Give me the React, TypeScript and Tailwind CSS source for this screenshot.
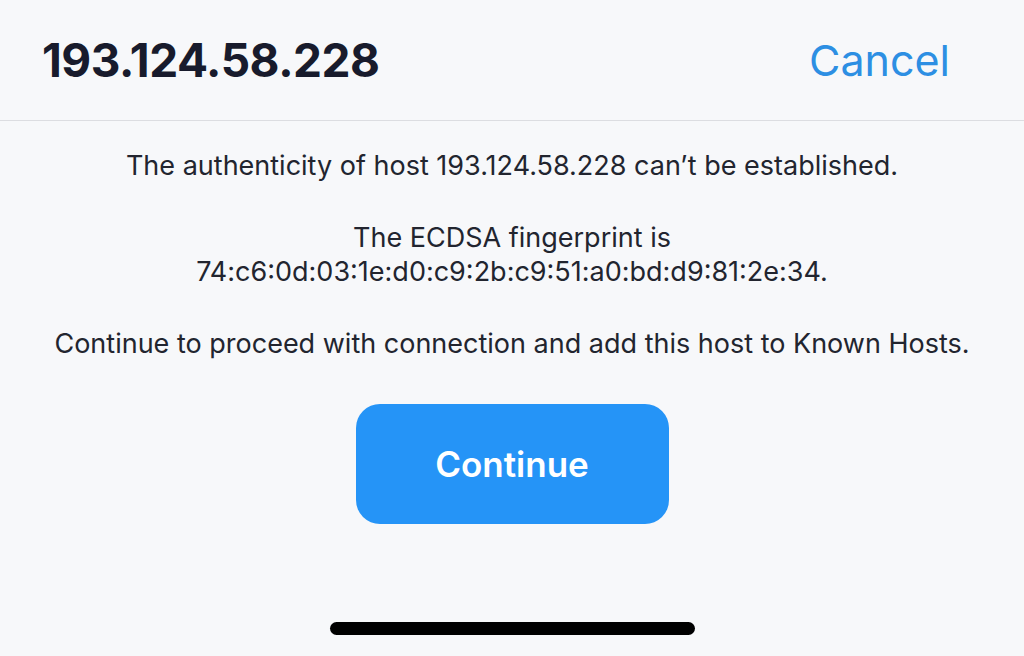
import React from "react";

const bodyFont = { fontFamily: "Inter, 'Noto Sans', sans-serif" };

export default function App() {
  return (
    <div
      className="flex h-[656px] w-[1024px] flex-col overflow-hidden bg-[#f7f8fa] text-[#22252f]"
      style={bodyFont}
    >
      <header className="flex h-[121px] shrink-0 items-center justify-between border-b border-[#dcdde1] pl-[42px] pr-[74px]">
        <h1 className="text-[46px] font-bold leading-none tracking-[-0.01em] text-[#181b2c]">
          193.124.58.228
        </h1>
        <button className="text-[43px] leading-none text-[#2d8fe3]">Cancel</button>
      </header>

      <main className="flex flex-col items-center text-center text-[27px] leading-[34px]">
        <p className="mt-[28px]">
          The authenticity of host 193.124.58.228 can’t be established.
        </p>
        <p className="mt-[38px]">
          The ECDSA fingerprint is
          <br />
          74:c6:0d:03:1e:d0:c9:2b:c9:51:a0:bd:d9:81:2e:34.
        </p>
        <p className="mt-[38px]">
          Continue to proceed with connection and add this host to Known Hosts.
        </p>
        <button className="mt-[43px] flex h-[120px] w-[313px] items-center justify-center rounded-[24px] bg-[#2594f7] text-[35px] font-semibold text-white">
          Continue
        </button>
      </main>

      <div className="mt-auto mb-[21px] flex justify-center">
        <div className="h-[13px] w-[365px] rounded-full bg-black" />
      </div>
    </div>
  );
}
